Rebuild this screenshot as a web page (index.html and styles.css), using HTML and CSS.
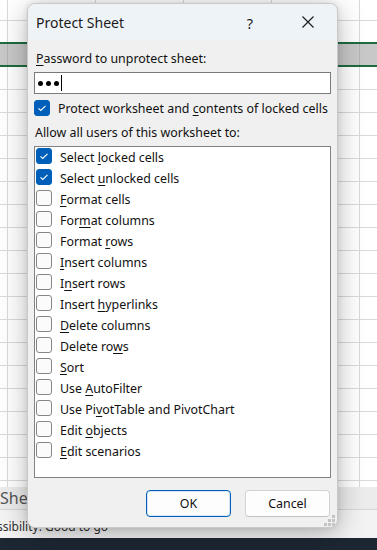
FILE: index.html
```html
<!DOCTYPE html>
<html>
<head>
<meta charset="utf-8">
<link rel="stylesheet" href="styles.css">
</head>
<body>
<div class="app">
  <div class="sheet">
    <div class="sel-row"></div>
  </div>
  <div class="tabs"><span class="tab-name">Sheet1</span></div>
  <div class="status"><span class="status-text">Accessibility: Good to go</span></div>
  <div class="taskbar"></div>

  <div class="dialog">
    <div class="titlebar">
      <span class="title">Protect Sheet</span>
      <span class="help">?</span>
      <span class="close">
        <svg width="12" height="12" viewBox="0 0 12 12"><path d="M0.5 0.5 L11.5 11.5 M11.5 0.5 L0.5 11.5" stroke="#1a1a1a" stroke-width="1.1" fill="none"/></svg>
      </span>
    </div>
    <div class="body">
      <div class="lbl lbl-pw"><u>P</u>assword to unprotect sheet:</div>
      <div class="input"><span class="dot"></span><span class="dot"></span><span class="dot"></span><span class="caret"></span></div>
      <div class="row-check">
        <span class="cb on"><svg width="16" height="16" viewBox="0 0 16 16"><path d="M4.5 8.3 L6.8 10.5 L11.5 5.8" stroke="#fff" stroke-width="1.1" fill="none"/></svg></span>
        <span>Protect worksheet and <u>c</u>ontents of locked cells</span>
      </div>
      <div class="lbl lbl-allow">Allow all users of this worksheet to:</div>
      <div class="list">
        <div class="item"><span class="cb on"><svg width="16" height="16" viewBox="0 0 16 16"><path d="M4.5 8.3 L6.8 10.5 L11.5 5.8" stroke="#fff" stroke-width="1.1" fill="none"/></svg></span><span>Select <u>l</u>ocked cells</span></div>
        <div class="item"><span class="cb on"><svg width="16" height="16" viewBox="0 0 16 16"><path d="M4.5 8.3 L6.8 10.5 L11.5 5.8" stroke="#fff" stroke-width="1.1" fill="none"/></svg></span><span>Select <u>u</u>nlocked cells</span></div>
        <div class="item"><span class="cb"></span><span><u>F</u>ormat cells</span></div>
        <div class="item"><span class="cb"></span><span>For<u>m</u>at columns</span></div>
        <div class="item"><span class="cb"></span><span>Format <u>r</u>ows</span></div>
        <div class="item"><span class="cb"></span><span><u>I</u>nsert columns</span></div>
        <div class="item"><span class="cb"></span><span>I<u>n</u>sert rows</span></div>
        <div class="item"><span class="cb"></span><span>Insert <u>h</u>yperlinks</span></div>
        <div class="item"><span class="cb"></span><span><u>D</u>elete columns</span></div>
        <div class="item"><span class="cb"></span><span>Delete ro<u>w</u>s</span></div>
        <div class="item"><span class="cb"></span><span><u>S</u>ort</span></div>
        <div class="item"><span class="cb"></span><span>Use <u>A</u>utoFilter</span></div>
        <div class="item"><span class="cb"></span><span>Use Pi<u>v</u>otTable and PivotChart</span></div>
        <div class="item"><span class="cb"></span><span>Edit <u>o</u>bjects</span></div>
        <div class="item"><span class="cb"></span><span><u>E</u>dit scenarios</span></div>
      </div>
      <div class="buttons">
        <button class="btn btn-default">OK</button>
        <button class="btn">Cancel</button>
      </div>
    </div>
    <div class="grip">
      <i class="g1"></i><i class="g2"></i><i class="g3"></i><i class="g4"></i><i class="g5"></i><i class="g6"></i>
    </div>
  </div>
</div>
</body>
</html>
```

FILE: styles.css
```css
* { box-sizing: border-box; }
html, body { margin: 0; padding: 0; }
body {
  width: 377px;
  height: 550px;
  overflow: hidden;
  background: #fff;
  font-family: "Noto Sans", "Open Sans", sans-serif;
}
.app {
  position: relative;
  width: 377px;
  height: 550px;
  display: flex;
  flex-direction: column;
}
.sheet {
  height: 487px;
  flex: none;
  display: flex;
  flex-direction: column;
  background-color: #fff;
  background-image:
    linear-gradient(to right, #dadada 1px, transparent 1px),
    linear-gradient(to bottom, #dadada 1px, transparent 1px);
  background-size: 88px 100%, 100% 23px;
  background-position: 7px 0, 0 20px;
}
.sel-row {
  margin-top: 42px;
  height: 25px;
  border-top: 2px solid #1e6b41;
  border-bottom: 2px solid #1e6b41;
  background-color: #c8c8c8;
  background-image: linear-gradient(to right, #b4b4b4 1px, transparent 1px);
  background-size: 88px 100%;
  background-position: 7px 0;
}
.tabs {
  height: 23px;
  flex: none;
  background: #ececec;
  border-bottom: 1px solid #d6d6d6;
  display: flex;
  align-items: center;
  color: #555;
  font-size: 16px;
}
.tab-name { margin-left: 0; line-height: 1; }
.status {
  height: 28px;
  flex: none;
  background: #f3f3f3;
  display: flex;
  align-items: center;
  font-size: 12px;
  color: #303030;
  overflow: hidden;
  white-space: nowrap;
}
.status-text { margin-left: -29px; padding-top: 4px; }
.taskbar {
  flex: 1;
  background: #1d2733;
}

/* dialog */
.dialog {
  position: absolute;
  left: 27px;
  top: 3px;
  width: 311px;
  height: 525px;
  background: #f0f0f0;
  border: 1px solid #c9c9c9;
  border-radius: 8px;
  box-shadow: 0 6px 28px rgba(0,0,0,0.28), 0 0 6px rgba(0,0,0,0.10);
  overflow: hidden;
  color: #111;
  font-size: 12.4px;
}
.titlebar {
  height: 36px;
  background: #eef3f8;
  display: flex;
  align-items: center;
  padding-left: 8px;
}
.title {
  font-size: 14px;
  color: #1a1a1a;
  flex: 1;
  padding-top: 1px;
}
.help {
  font-size: 14.5px;
  color: #1a1a1a;
  margin-right: 49px;
  padding-top: 1px;
}
.close {
  display: flex;
  width: 12px;
  height: 12px;
  margin-right: 23px;
}
.body {
  padding: 0 6px;
  display: flex;
  flex-direction: column;
}
.lbl {
  height: 16px;
  line-height: 16px;
  white-space: nowrap;
}
.lbl-pw { margin-top: 11px; padding-left: 2px; }
u { text-decoration-thickness: 1px; text-underline-offset: 2px; }
.input {
  margin-top: 5px;
  height: 22px;
  background: #fff;
  border: 1px solid #7a7a7a;
  display: flex;
  align-items: center;
  gap: 3px;
  padding-left: 3px;
}
.dot {
  width: 5px;
  height: 5px;
  border-radius: 50%;
  background: #000;
  flex: none;
}
.caret {
  width: 1px;
  height: 16px;
  background: #000;
  margin-left: -1px;
}
.row-check {
  margin-top: 6px;
  height: 16px;
  display: flex;
  align-items: center;
  gap: 8px;
  white-space: nowrap;
}
.lbl-allow { margin-top: 9px; padding-left: 1px; }
.cb {
  width: 16px;
  height: 16px;
  flex: none;
  border: 1px solid #868686;
  border-radius: 3px;
  background: #fbfbfb;
  display: flex;
}
.cb.on {
  background: #005fb8;
  border-color: #005fb8;
}
.cb.on svg { margin: -1px; }
.list {
  margin-top: 5px;
  height: 332px;
  background: #fff;
  border: 1px solid #828282;
  padding-left: 1px;
  display: flex;
  flex-direction: column;
}
.item {
  height: 21px;
  display: flex;
  align-items: flex-start;
  gap: 8px;
  white-space: nowrap;
}
.item .cb { margin-top: 1px; }
.item span:last-child { line-height: 21px; }
.buttons {
  margin-top: 12px;
  display: flex;
  justify-content: flex-end;
  gap: 14px;
  padding-right: 1px;
}
.btn {
  width: 85px;
  height: 27px;
  border: 1px solid #d3d3d3;
  border-bottom-color: #c2c2c2;
  border-radius: 4px;
  background: #fdfdfd;
  font-family: inherit;
  font-size: 12.4px;
  color: #111;
  padding: 0;
}
.btn-default {
  border: 1px solid #005fb8;
  box-shadow: inset 0 0 0 1px rgba(0,95,184,0.15);
}
.grip {
  position: absolute;
  right: 2px;
  bottom: 2px;
  width: 10px;
  height: 10px;
}
.grip i {
  position: absolute;
  width: 3px;
  height: 3px;
  background: #c4c4c4;
}
.grip .g1 { right: 0; top: 0; }
.grip .g2 { right: 0; top: 4px; }
.grip .g3 { right: 4px; top: 4px; }
.grip .g4 { right: 0; top: 8px; }
.grip .g5 { right: 4px; top: 8px; }
.grip .g6 { right: 8px; top: 8px; }
```
